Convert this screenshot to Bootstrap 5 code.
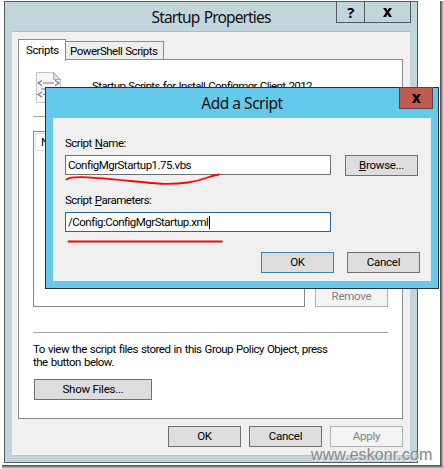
<!DOCTYPE html>
<html lang="en">
<head>
<meta charset="utf-8">
<title>Startup Properties</title>
<link rel="stylesheet" href="https://cdn.jsdelivr.net/npm/bootstrap@5.3.0/dist/css/bootstrap.min.css">
<style>
body{width:444px;height:469px;overflow:hidden;font:11.5px/13px Roboto,"Liberation Sans",Arial,sans-serif;letter-spacing:-.5px;word-spacing:.7px;color:#000;background:#fff}
svg{display:block}
.sheet{width:444px;height:469px}
.shade-r{left:440px;top:1px;width:4px;height:468px;background:linear-gradient(90deg,#444,#777 35%,#bbb 70%,#e4e4e4)}
.shade-b{left:2px;top:465px;width:440px;height:4px;background:linear-gradient(#444,#777 35%,#bbb 70%,#e4e4e4)}
.win-main{left:4px;top:1px;width:414px;height:462px;border:1px solid #525a62;background:#c2d5db;padding:0 7px 7px}
.win-title{font:15.5px/20px "Noto Sans","Open Sans",sans-serif;letter-spacing:-.48px;word-spacing:0;color:#111;padding-top:5px}
.bar-main,.bar-script{height:29px}
.bar-main .win-title{letter-spacing:-.85px;word-spacing:1px}
.caption{right:-1px;top:-1px;height:22px}
.caption span{border:1px solid #525a62;display:flex;align-items:center;justify-content:center;font:bold 15px/14px "Open Sans",sans-serif}
.cap-help{width:29px}.cap-close{width:47px;margin-left:-1px}
.face{background:#f0f0f0;border-top:1px solid #aebcc8;border-bottom:1px solid #b5c4ca;height:425px;padding:7px 7px 0 6px}
.tab-strip{height:20px}
.tab-strip>div{border:1px solid #8b8c95;border-bottom:0;white-space:nowrap}
.tab-on{width:48px;height:22px;background:#fff;position:relative;z-index:1;padding:4px 0 0 7px;letter-spacing:-.4px}
.tab-off{width:99px;height:18px;background:#eeeeef;margin-left:-1px;padding:3px 0 0 4px}
.sheet-page{border:1px solid #8b8c95;background:#fff;height:360px;padding:12px 14px 0}
.page-head{height:45px;border-bottom:1px solid #a0a0a0;padding-left:3px}
.head-text{padding:8px 0 0 30px;white-space:nowrap;letter-spacing:-.6px}
.list-area{margin-top:14px;height:176px}
.listbox{width:272px;border:1px solid #828790;padding:1px}
.list-head{height:18px;border:1px solid #e0e0e0;padding:2px 5px;width:80px}
.push{height:21px;border:1px solid #707070;background:#ddd;border-radius:0;padding:0;width:73px;font:inherit;line-height:19px;text-align:center;color:#000;letter-spacing:-.25px}
.push:disabled{opacity:1;background:#f4f4f4;border-color:#adb2b5;color:#838383}
.push.main{border-color:#3c7fb1;background:#ddd;margin-right:13px}
.push.wide{width:118px;margin:10px 0 0 1px}
.divide{height:1px;background:#a0a0a0;margin-top:25px}
.info{margin:10px -8px 0 0;white-space:nowrap}
.foot{margin:7px 0 0;gap:8px}
.win-script{left:45px;top:87px;width:394px;height:202px;border:1px solid #26303a;background:#64c9ea;padding:0 7px 7px}
.close-red{right:5px;top:-1px;width:34px;height:22px;border:1px solid #62403f;background:#c35a50}
.face2{height:165px;background:#f0f0f0;border:1px solid #92b9cb;border-left-color:#f0f0f0;border-right-color:#f0f0f0;padding:19px 10px 0 11px}
.label-one{margin-bottom:5px}.label-two{margin:18px 0 5px}
.field{width:266px;height:20px;border:1px solid #707070;border-radius:0;padding:0 2px;line-height:19px;background:#fff;color:#000;white-space:nowrap;margin-right:14px}
.field.hot{border-color:#2a6496}
.choices{margin-top:20px}
.caret{width:1px;height:13px;background:#000;display:inline-block;vertical-align:-3px;margin-left:1px}
.ink{left:60px;top:170px}
.mark-url{left:311px;top:444px;font:16px/22px "Liberation Sans",sans-serif;letter-spacing:.1px;color:#858b8e;text-shadow:1px 1px 0 #eee;white-space:nowrap}
</style>
<script src="https://cdn.jsdelivr.net/npm/bootstrap@5.3.0/dist/js/bootstrap.bundle.min.js"></script>
</head>
<body>
<main class="sheet position-relative overflow-hidden">
  <div class="shade-r position-absolute"></div><div class="shade-b position-absolute"></div>
  <section class="win-main position-absolute">
    <header class="bar-main position-relative text-center">
      <div class="win-title">Startup Properties</div>
      <div class="caption position-absolute d-flex"><span class="cap-help">?</span><span class="cap-close"><svg width="9" height="9" viewBox="0 0 9 9"><path d="M0 0h3l1.500 2.600L6 0h3L6 4.200 9 9H6L4.500 6.200 3 9H0l3-4.800z"/></svg></span></div>
    </header>
    <div class="face">
      <div class="tab-strip d-flex align-items-end"><div class="tab-on align-self-start">Scripts</div><div class="tab-off">PowerShell Scripts</div></div>
      <div class="sheet-page">
        <div class="page-head d-flex">
          <svg width="26" height="32" viewBox="0 0 26 32"><path d="M.5.5h17l7 7v23H.5z" fill="#f7f7f8" stroke="#c4c4c8"/><path d="M17.500.5v7h7z" fill="#ddd" stroke="#aaa"/><g fill="none" stroke="#77779a" stroke-width="1.200"><path d="M6 8.500 2 11l4 2.500M7 11h11M19 8.500l4 2.500-4 2.500M5 17h12M6 20l-4 2.500L6 25M7 22.500h11"/></g></svg>
          <div class="head-text">Startup Scripts for Install Configmgr Client 2012</div>
        </div>
        <div class="list-area d-flex justify-content-between align-items-stretch">
          <div class="listbox"><div class="list-head">Name</div></div>
          <button class="btn push align-self-end" disabled>Remove</button>
        </div>
        <div class="divide"></div>
        <div class="info">To view the script files stored in this Group Policy Object, press<br>the button below.</div>
        <button class="btn push wide d-block">Show Files...</button>
      </div>
      <div class="foot d-flex justify-content-end"><button class="btn push">OK</button><button class="btn push">Cancel</button><button class="btn push" disabled>Apply</button></div>
    </div>
  </section>
  <section class="win-script position-absolute">
    <header class="bar-script text-center">
      <div class="win-title">Add a Script</div>
    </header>
    <div class="close-red position-absolute d-flex align-items-center justify-content-center"><svg width="9" height="9" viewBox="0 0 9 9"><path d="M0 0h3l1.500 2.600L6 0h3L6 4.200 9 9H6L4.500 6.200 3 9H0l3-4.800z"/></svg></div>
    <div class="face2">
      <div class="label-one">Script <u>N</u>ame:</div>
      <div class="d-flex"><div class="field">ConfigMgrStartup1.75.vbs</div><button class="btn push"><u>B</u>rowse...</button></div>
      <div class="label-two">Script <u>P</u>arameters:</div>
      <div class="field hot">/Config:ConfigMgrStartup.xml<span class="caret"></span></div>
      <div class="choices d-flex justify-content-end"><button class="btn push main">OK</button><button class="btn push">Cancel</button></div>
    </div>
  </section>
  <svg class="ink position-absolute" width="170" height="76" viewBox="60 170 170 76" fill="none" stroke="#f00b0b" stroke-width="1.800" stroke-linecap="round"><path d="M66.500 179.500C72 175 100 178 130 181S170 185 188 182.500 207 176 219 174.500"/><path d="M68.500 241.500H222"/></svg>
  <div class="mark-url position-absolute">www.eskonr.com</div>
</main>
</body>
</html>
